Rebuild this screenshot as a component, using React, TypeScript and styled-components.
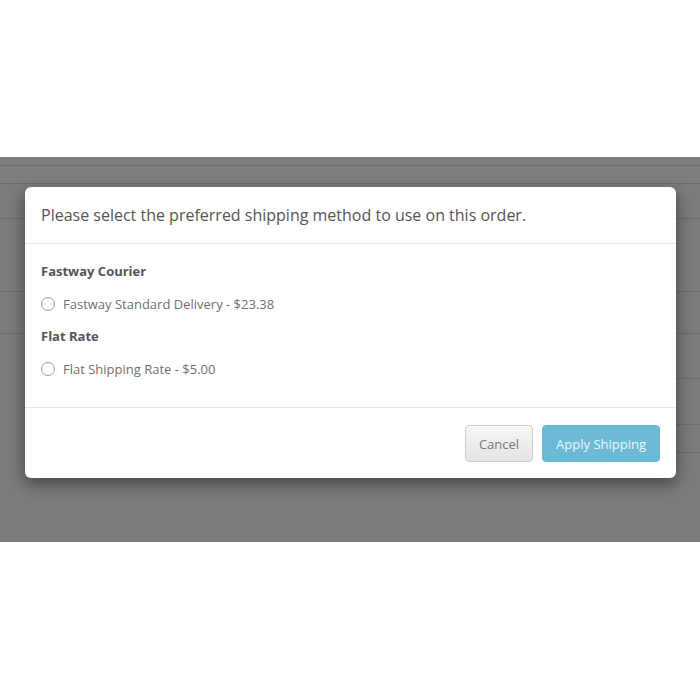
import React from "react";
import styled, { createGlobalStyle } from "styled-components";

const GlobalStyle = createGlobalStyle`
  html, body {
    margin: 0;
    padding: 0;
    background: #ffffff;
    font-family: "Open Sans", "Liberation Sans", Arial, sans-serif;
  }
`;

const Page = styled.div`
  width: 700px;
  height: 700px;
  display: flex;
  flex-direction: column;
  background: #ffffff;
`;

const TopSpace = styled.div`
  height: 157px;
  flex: none;
`;

const Backdrop = styled.div`
  position: relative;
  height: 385px;
  flex: none;
  background: #7b7b7b;
  display: flex;
  flex-direction: column;
`;

const BgRow = styled.div<{ $h: number; $shade?: string }>`
  height: ${(p) => p.$h}px;
  flex: none;
  background: ${(p) => p.$shade || "#7b7b7b"};
  border-bottom: 1px solid #6b6b6b;
`;

const BgCell = styled.div<{ $h: number }>`
  height: ${(p) => p.$h}px;
  flex: none;
  margin-left: 560px;
  border-bottom: 1px solid #6d6d6d;
`;

const Modal = styled.div`
  position: absolute;
  left: 25px;
  top: 30px;
  width: 651px;
  background: #ffffff;
  border-radius: 6px;
  box-shadow: 0 6px 16px rgba(0, 0, 0, 0.45);
  display: flex;
  flex-direction: column;
`;

const Header = styled.div`
  padding: 15px 16px;
  border-bottom: 1px solid #e5e5e5;
  font-size: 16px;
  line-height: 26px;
  color: #555555;
`;

const Body = styled.div`
  padding: 17px 16px 28px;
  display: flex;
  flex-direction: column;
`;

const GroupTitle = styled.div<{ $gap?: number }>`
  margin-top: ${(p) => p.$gap || 0}px;
  font-size: 13px;
  font-weight: 700;
  line-height: 20px;
  color: #555555;
`;

const RadioRow = styled.label`
  margin-top: 13px;
  display: flex;
  align-items: center;
  gap: 8px;
  font-size: 13px;
  line-height: 20px;
  color: #6f6f6f;
`;

const RadioCircle = styled.span`
  width: 14px;
  height: 14px;
  box-sizing: border-box;
  border: 1px solid #9a9a9a;
  border-radius: 50%;
  background: #ffffff;
  flex: none;
`;

const Footer = styled.div`
  padding: 17px 16px 16px;
  border-top: 1px solid #e5e5e5;
  display: flex;
  justify-content: flex-end;
  gap: 9px;
`;

const Button = styled.button<{ $primary?: boolean }>`
  height: 37px;
  padding: 0 13px;
  box-sizing: border-box;
  border-radius: 4px;
  font-family: "Open Sans", "Liberation Sans", Arial, sans-serif;
  font-size: 13px;
  border: 1px solid ${(p) => (p.$primary ? "#68b6d4" : "#cccccc")};
  color: ${(p) => (p.$primary ? "#eef7fb" : "#777777")};
  background: ${(p) =>
    p.$primary
      ? "#6cbad8"
      : "linear-gradient(to bottom, #f7f7f7 0%, #e4e4e4 100%)"};
  box-shadow: ${(p) => (p.$primary ? "none" : "inset 0 1px 0 #ffffff")};
`;

const App = () => {
  return (
    <Page>
      <GlobalStyle />
      <TopSpace />
      <Backdrop>
        <BgRow $h={8} $shade="#7e7e7e" />
        <BgRow $h={17} $shade="#7d7d7d" />
        <BgRow $h={34} />
        <BgRow $h={72} />
        <BgRow $h={41} />
        <BgCell $h={44} />
        <BgCell $h={45} />
        <BgCell $h={27} />
        <Modal>
          <Header>
            Please select the preferred shipping method to use on this order.
          </Header>
          <Body>
            <GroupTitle>Fastway Courier</GroupTitle>
            <RadioRow>
              <RadioCircle />
              Fastway Standard Delivery - $23.38
            </RadioRow>
            <GroupTitle $gap={12}>Flat Rate</GroupTitle>
            <RadioRow>
              <RadioCircle />
              Flat Shipping Rate - $5.00
            </RadioRow>
          </Body>
          <Footer>
            <Button>Cancel</Button>
            <Button $primary>Apply Shipping</Button>
          </Footer>
        </Modal>
      </Backdrop>
    </Page>
  );
};

export default App;
